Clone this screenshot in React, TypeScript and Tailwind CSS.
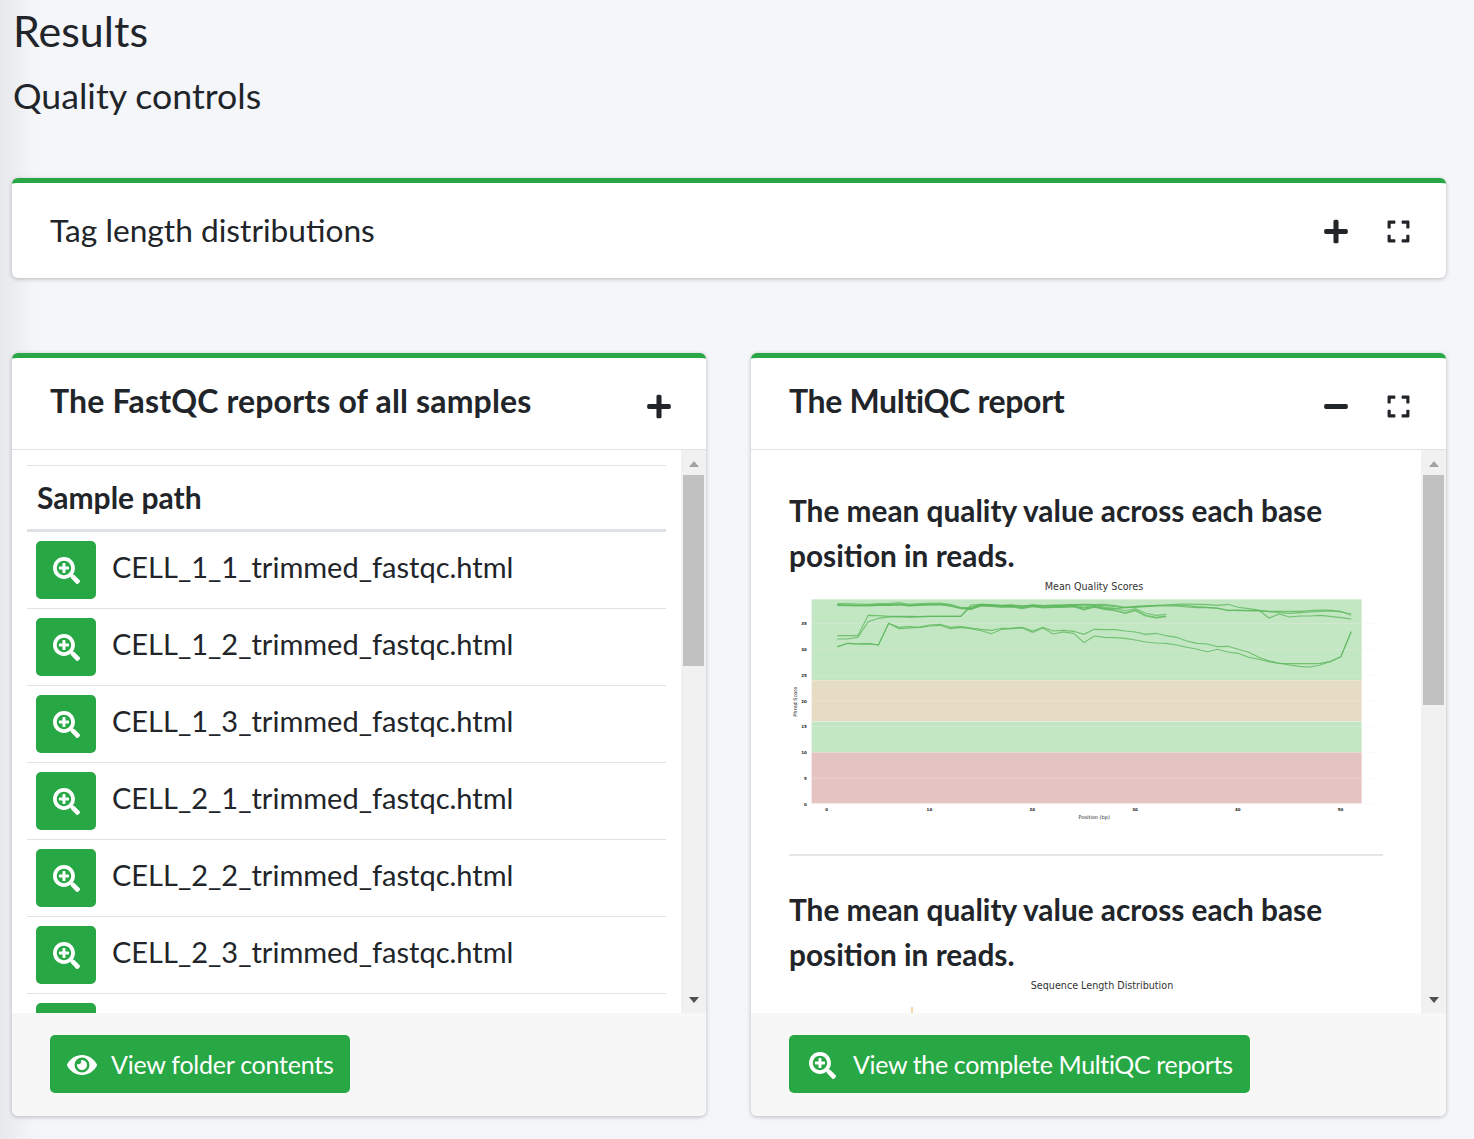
import { FaEye, FaExpand, FaMinus, FaPlus, FaSearchPlus } from 'react-icons/fa';

const samples = [
  'CELL_1_1_trimmed_fastqc.html',
  'CELL_1_2_trimmed_fastqc.html',
  'CELL_1_3_trimmed_fastqc.html',
  'CELL_2_1_trimmed_fastqc.html',
  'CELL_2_2_trimmed_fastqc.html',
  'CELL_2_3_trimmed_fastqc.html',
  ''
];

// values read off the picture, one per read position
const shortTop = [101, 101, 102, 103, 101, 101, 98, 103, 101, 100, 99, 103, 112, 118, 103, 104, 107, 106, 110, 105, 108, 107, 107, 104, 112, 106, 112, 115, 122, 116, 130, 136, 133];
const shortTop2 = [104, 105, 105, 106, 104, 104, 102, 106, 104, 103, 102, 106, 114, 116, 106, 107, 110, 109, 114, 108, 112, 110, 110, 108, 118, 110, 116, 120, 128, 120, 136, 142, 138];
const midA = [197, 197, 197, 136, 137, 139, 139, 139, 140, 139, 139, 139, 139, 105, 103, 105, 106, 105, 108, 105, 107, 106, 105, 104, 103, 104, 103, 107, 112, 110, 108, 106, 105, 103, 102, 103, 104, 106, 103, 112, 116, 120, 144, 132, 141, 138, 138, 136, 139, 143, 147];
const midB = [207, 207, 202, 155, 145, 141, 140, 142, 140, 139, 139, 139, 139, 110, 106, 108, 108, 110, 113, 108, 112, 111, 110, 110, 114, 110, 115, 117, 112, 112, 110, 108, 108, 108, 111, 113, 113, 114, 122, 120, 122, 122, 124, 124, 124, 124, 122, 120, 121, 124, 136];
const longTop = [106, 106, 107, 106, 105, 106, 104, 107, 105, 104, 103, 108, 114, 112, 104, 105, 107, 106, 108, 106, 107, 106, 105, 106, 105, 106, 107, 110, 114, 109, 108, 107, 105, 106, 107, 110, 112, 115, 120, 122, 122, 122, 125, 128, 130, 128, 126, 124, 123, 126, 132];
const lowA = [230, 220, 222, 221, 225, 160, 172, 170, 172, 165, 163, 172, 170, 174, 178, 181, 175, 174, 172, 183, 172, 183, 181, 184, 193, 178, 179, 179, 183, 186, 193, 190, 197, 202, 213, 220, 222, 230, 229, 238, 246, 262, 272, 280, 285, 289, 291, 285, 274, 260, 185];
const lowB = [230, 220, 222, 221, 225, 160, 176, 174, 172, 168, 166, 176, 172, 176, 182, 191, 178, 176, 174, 187, 174, 192, 186, 190, 218, 198, 202, 203, 205, 210, 216, 219, 220, 225, 232, 238, 245, 238, 246, 250, 262, 268, 275, 280, 281, 281, 281, 280, 275, 260, 185];

const grid = [160, 238, 316, 393, 470, 547, 625, 702];
const yTicks = ['35', '30', '25', '20', '15', '10', '5', '0'];
const xTicks = [[118, '0'], [378, '10'], [638, '20'], [898, '30'], [1158, '40'], [1418, '50']] as const;

// crop coordinates to chart pixels (chart starts at x 789, y 579 on the page)
const px = (x: number) => x / 2.53 - 9;
const py = (y: number) => y / 3 - 9;

const toPoints = (values: number[]) =>
  values.map((v, i) => `${px(145 + i * 26)},${py(v)}`).join(' ');

const QualityChart = () => (
  <svg width="594" height="245" className="block">
    <text x="305" y="11" textAnchor="middle" fontSize="9.6" fill="#333" fontFamily="'DejaVu Sans', sans-serif">Mean Quality Scores</text>
    <rect x={px(80)} y={py(88)} width="550" height="81" fill="#c3e6c3" />
    <rect x={px(80)} y={py(331)} width="550" height="41" fill="#e6dcc3" />
    <rect x={px(80)} y={py(455)} width="550" height="31" fill="#c3e6c3" />
    <rect x={px(80)} y={py(547)} width="550" height="51" fill="#e6c3c3" />
    {grid.map((g) => (
      <line key={g} x1={px(80)} x2={px(1510)} y1={py(g)} y2={py(g)} stroke="#eeeeee" strokeOpacity="0.35" />
    ))}
    {[shortTop, shortTop2, [...shortTop2.map((v) => v + 2)]].map((line, i) => (
      <polyline key={i} points={toPoints(line)} fill="none" stroke="#5cb85c" strokeWidth="1.1" strokeOpacity="0.75" />
    ))}
    {[midA, midB, longTop, lowA, lowB].map((line, i) => (
      <polyline key={i} points={toPoints(line)} fill="none" stroke="#5cb85c" strokeWidth="1.1" strokeOpacity="0.8" />
    ))}
    <g fontSize="4" fontWeight="bold" fill="#222" fontFamily="'DejaVu Sans', sans-serif">
      {yTicks.map((t, i) => (
        <text key={t} x={px(68)} y={py(grid[i]) + 1.5} textAnchor="end">{t}</text>
      ))}
      {xTicks.map(([x, t]) => (
        <text key={t} x={px(x)} y={py(724)} textAnchor="middle">{t}</text>
      ))}
      <text x={px(795)} y={py(746)} textAnchor="middle" fontSize="5" fontWeight="normal">Position (bp)</text>
      <text transform={`translate(${px(44)} ${py(395)}) rotate(-90)`} textAnchor="middle" fontSize="5" fontWeight="normal">Phred Score</text>
    </g>
  </svg>
);

const LengthChart = () => (
  <svg width="594" height="245" className="block">
    <text x="313" y="11" textAnchor="middle" fontSize="9.6" fill="#333" fontFamily="'DejaVu Sans', sans-serif">Sequence Length Distribution</text>
    <line x1="123" x2="123" y1="29" y2="120" stroke="#f0ad4e" />
  </svg>
);

const Scrollbar = ({ thumb }: { thumb: string }) => (
  <div className="flex w-[25px] shrink-0 flex-col items-center bg-[#f1f1f1]">
    <svg width="12" height="25" className="shrink-0">
      <path d="M1 17 L6 11 L11 17 Z" fill="#a3a3a3" />
    </svg>
    <div className={`w-[21px] shrink-0 bg-[#c1c1c1] ${thumb}`} />
    <div className="flex-1" />
    <svg width="12" height="26" className="shrink-0">
      <path d="M1 10 L6 16 L11 10 Z" fill="#505050" />
    </svg>
  </div>
);

const CardTools = ({ open }: { open: boolean }) => (
  <div className="flex items-center gap-[38px] text-[#212529]">
    {open ? <FaMinus className="h-[27px] w-[24px]" /> : <FaPlus className="h-[27px] w-[24px]" />}
    <FaExpand className="h-[25px] w-[25px]" />
  </div>
);

const GreenButton = ({ icon, label, spacing }: { icon: React.ReactNode; label: string; spacing: string }) => (
  <button className={`flex h-[58px] items-center rounded-[5px] bg-[#28a745] pr-[17px] pt-[2px] text-[25px] text-white ${spacing}`}>
    {icon}
    {label}
  </button>
);

const SampleRow = ({ name }: { name: string }) => (
  <div className="flex h-[77px] shrink-0 items-start border-b border-[#dee2e6] pl-[9px] pt-[9px]">
    <button className="flex h-[58px] w-[60px] shrink-0 items-center justify-center rounded-[5px] bg-[#28a745] text-white">
      <FaSearchPlus className="h-[27px] w-[27px]" />
    </button>
    {name && <span className="ml-[16px] text-[29px] leading-[52px] text-[#212529]">{name}</span>}
  </div>
);

const BoldHeading = () => (
  <h4 className="text-[29.8px] font-bold leading-[45px] text-[#212529]">
    The mean quality value across each base position in reads.
  </h4>
);

export default function App() {
  return (
    <div className="min-h-[1139px] bg-[#f4f6f9] bg-[linear-gradient(90deg,#e6e8ec_0,#f4f6f9_36px)] pb-[23px] pl-[12px] pr-[28px] font-['Lato','Noto_Sans',sans-serif] text-[#212529]">
      <h1 className="h-[64px] pl-[1px] text-[43px] leading-[62px]">Results</h1>
      <h2 className="h-[64px] pl-[1px] text-[35.7px] leading-[64px]">Quality controls</h2>

      <section className="mt-[50px] flex h-[100px] items-center justify-between rounded-[6px] border-t-[5px] border-[#28a745] bg-white pl-[38px] pr-[35px] shadow-[0_1px_4px_rgba(0,0,0,0.25)]">
        <h3 className="pb-[2px] text-[31.7px] leading-[48px]">Tag length distributions</h3>
        <div className="pt-[2px]">
          <CardTools open={false} />
        </div>
      </section>

      <div className="mt-[75px] grid grid-cols-[694px_695px] gap-[45px]">
        <section className="flex h-[763px] flex-col overflow-hidden rounded-[6px] border-t-[5px] border-[#28a745] bg-white shadow-[0_1px_4px_rgba(0,0,0,0.25)]">
          <header className="flex h-[92px] shrink-0 justify-between border-b border-[#dee2e6] pl-[38px] pr-[35px] pt-[20px]">
            <h3 className="text-[32px] font-bold leading-[46px] tracking-[0.15px]">The FastQC reports of all samples</h3>
            <div className="pt-[15px] text-[#212529]">
              <FaPlus className="h-[27px] w-[24px]" />
            </div>
          </header>
          <div className="flex h-[563px] shrink-0">
            <div className="flex-1 overflow-hidden pl-[15px] pr-[15px] pt-[15px]">
              <div className="flex h-[67px] items-center border-y border-[#dee2e6] border-b-[3px] pl-[10px] text-[30px] font-bold">
                Sample path
              </div>
              <div className="flex flex-col">
                {samples.map((s, i) => (
                  <SampleRow key={i} name={s} />
                ))}
              </div>
            </div>
            <Scrollbar thumb="h-[191px]" />
          </div>
          <footer className="flex flex-1 items-start bg-[#f7f7f7] pl-[38px] pt-[22px]">
            <GreenButton icon={<FaEye className="h-[30px] w-[30px]" />} label="View folder contents" spacing="gap-[14px] pl-[17px] tracking-[-0.25px]" />
          </footer>
        </section>

        <section className="flex h-[763px] flex-col overflow-hidden rounded-[6px] border-t-[5px] border-[#28a745] bg-white shadow-[0_1px_4px_rgba(0,0,0,0.25)]">
          <header className="flex h-[92px] shrink-0 justify-between border-b border-[#dee2e6] pl-[38px] pr-[35px] pt-[20px]">
            <h3 className="text-[32px] font-bold leading-[46px] tracking-[-0.33px]">The MultiQC report</h3>
            <div className="pt-[15px]">
              <CardTools open={true} />
            </div>
          </header>
          <div className="flex h-[563px] shrink-0">
            <div className="flex-1 overflow-hidden pl-[38px] pr-[38px] pt-[38px]">
              <BoldHeading />
              <div className="mt-[1px]">
                <QualityChart />
              </div>
              <hr className="mt-[30px] border-t-2 border-[#e3e5e8]" />
              <div className="mt-[31px]">
                <BoldHeading />
              </div>
              <div className="mt-[1px]">
                <LengthChart />
              </div>
            </div>
            <Scrollbar thumb="h-[230px]" />
          </div>
          <footer className="flex flex-1 items-start bg-[#f7f7f7] pl-[38px] pt-[22px]">
            <GreenButton icon={<FaSearchPlus className="h-[27px] w-[27px]" />} label="View the complete MultiQC reports" spacing="gap-[17px] pl-[20px] tracking-[-0.36px]" />
          </footer>
        </section>
      </div>
    </div>
  );
}
